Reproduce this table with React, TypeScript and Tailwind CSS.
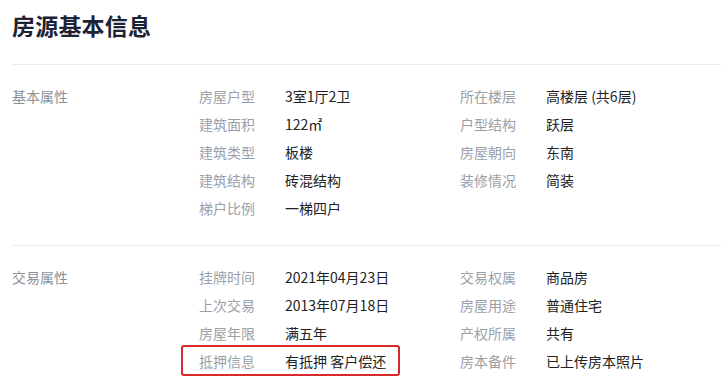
import React from 'react';

type Item = { label: string; value: string; highlight?: boolean };

const basic: Item[][] = [
  [
    { label: '房屋户型', value: '3室1厅2卫' },
    { label: '所在楼层', value: '高楼层 (共6层)' },
  ],
  [
    { label: '建筑面积', value: '122㎡' },
    { label: '户型结构', value: '跃层' },
  ],
  [
    { label: '建筑类型', value: '板楼' },
    { label: '房屋朝向', value: '东南' },
  ],
  [
    { label: '建筑结构', value: '砖混结构' },
    { label: '装修情况', value: '简装' },
  ],
  [{ label: '梯户比例', value: '一梯四户' }],
];

const trade: Item[][] = [
  [
    { label: '挂牌时间', value: '2021年04月23日' },
    { label: '交易权属', value: '商品房' },
  ],
  [
    { label: '上次交易', value: '2013年07月18日' },
    { label: '房屋用途', value: '普通住宅' },
  ],
  [
    { label: '房屋年限', value: '满五年' },
    { label: '产权所属', value: '共有' },
  ],
  [
    { label: '抵押信息', value: '有抵押 客户偿还', highlight: true },
    { label: '房本备件', value: '已上传房本照片' },
  ],
];

function Cell({ item }: { item: Item }) {
  return (
    <div className="relative flex h-[28px] w-[261px] items-center">
      {item.highlight && (
        <div className="absolute left-[-18px] top-[-2px] h-[31px] w-[219px] rounded-[3px] border-2 border-[#d9292b]" />
      )}
      <span className="w-[86px] text-[#9ba0a7]">{item.label}</span>
      <span className="text-[#222]">{item.value}</span>
    </div>
  );
}

function Section({ title, rows, last }: { title: string; rows: Item[][]; last?: boolean }) {
  return (
    <div className={`flex pt-[17px] ${last ? '' : 'border-b border-[#ececec] pb-[23px]'}`}>
      <div className="flex h-[28px] w-[188px] items-center text-[#8b9098]">{title}</div>
      <div className="flex flex-col">
        {rows.map((row, i) => (
          <div key={i} className="flex">
            {row.map((item) => (
              <Cell key={item.label} item={item} />
            ))}
          </div>
        ))}
      </div>
    </div>
  );
}

export default function App() {
  return (
    <div
      className="h-[382px] w-[721px] overflow-hidden bg-white pl-[12px] text-[14px]"
      style={{ fontFamily: '"Noto Sans CJK SC", "Noto Sans", sans-serif' }}
    >
      <div className="flex h-[65px] items-center border-b border-[#ececec] pb-[13px]">
        <h1 className="text-[23px] font-bold tracking-[0.2px] text-[#1c2333]">房源基本信息</h1>
      </div>
      <Section title="基本属性" rows={basic} />
      <Section title="交易属性" rows={trade} last />
    </div>
  );
}
